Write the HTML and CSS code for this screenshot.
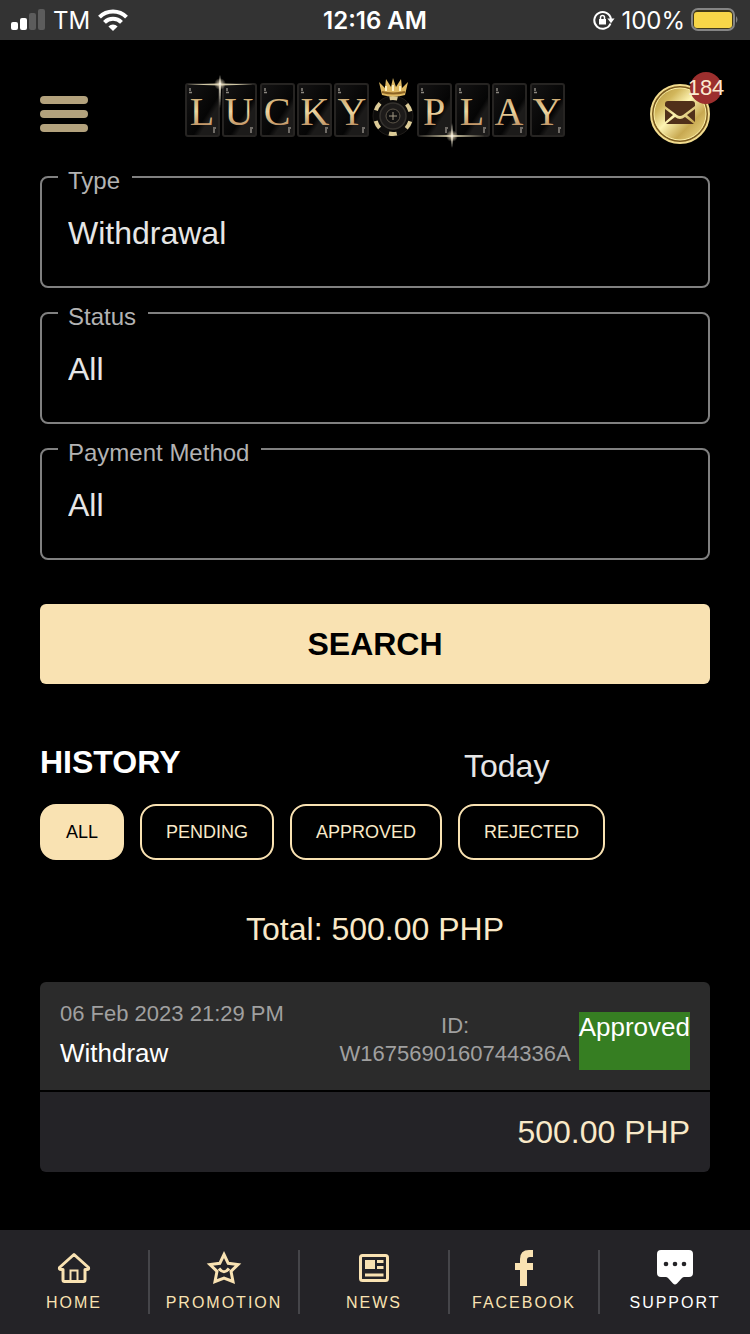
FILE: index.html
```html
<!DOCTYPE html>
<html lang="en">

<head>
    <meta charset="UTF-8" />
    <meta name="viewport" content="width=device-width, initial-scale=1.0" />
    <title>Lucky Play - History</title>
    <link rel="stylesheet" href="styles.css">
</head>

<body>

    <div class="status-bar">
        <div class="status-left">
            <svg width="34" height="22" viewBox="0 0 34 22">
                <rect x="0" y="13" width="7" height="8" rx="2" fill="#fff" />
                <rect x="9" y="9" width="7" height="12" rx="2" fill="#fff" />
                <rect x="18" y="4" width="7" height="17" rx="2" fill="#5c5c5c" />
                <rect x="27" y="0" width="7" height="21" rx="2" fill="#5c5c5c" />
            </svg>
            <span>TM</span>
            <svg width="30" height="22" viewBox="0 0 30 22" fill="none" stroke="#fff" stroke-width="4">
                <path d="M1.5 8.2a19 19 0 0 1 27 0" />
                <path d="M6.5 13.4a12 12 0 0 1 17 0" />
                <path d="M15 22l-4.6-4.6a6.6 6.6 0 0 1 9.2 0z" fill="#fff" stroke="none" />
            </svg>
        </div>
        <div class="status-time">12:16 AM</div>
        <div class="status-right">
            <svg width="22" height="20" viewBox="0 0 22 20" fill="none" stroke="#fff" stroke-width="2">
                <path d="M17.5 13.5A8.4 8.4 0 1 1 18 9" />
                <path d="M14.4 8.6h7.2l-3.6 4.6z" fill="#fff" stroke="none" />
                <path d="M6 9h7v5.5H6z" fill="#fff" stroke="none" />
                <path d="M7.5 9V7.5a2 2 0 0 1 4 0V9" stroke-width="1.5" />
            </svg>
            <span>100%</span>
            <svg width="48" height="24" viewBox="0 0 48 24">
                <rect x="1" y="1" width="42" height="21" rx="6" fill="#40381a" stroke="#858585" stroke-width="2" />
                <rect x="3" y="4" width="38" height="16" rx="3" fill="#f8d648" />
                <path d="M45 8q3 3.5 0 7z" fill="#858585" />
            </svg>
        </div>
    </div>

    <header class="header">
        <button class="menu-btn" aria-label="Menu">
            <span></span><span></span><span></span>
        </button>

        <svg width="380" height="78" viewBox="0 0 380 78" role="img" aria-label="Lucky Play">
            <defs>
                <linearGradient id="gold" x1="0" y1="0" x2="0" y2="1">
                    <stop offset="0" stop-color="#b98f55" />
                    <stop offset="0.5" stop-color="#ecd5a0" />
                    <stop offset="1" stop-color="#a86f43" />
                </linearGradient>
                <linearGradient id="card-fill" x1="0" y1="0" x2="1" y2="1">
                    <stop offset="0" stop-color="#151414" />
                    <stop offset="0.6" stop-color="#050505" />
                    <stop offset="0.7" stop-color="#1c1b1a" />
                </linearGradient>
                <radialGradient id="spark">
                    <stop offset="0" stop-color="#fff" />
                    <stop offset="0.3" stop-color="#e8dcc0" stop-opacity="0.7" />
                    <stop offset="1" stop-color="#e8dcc0" stop-opacity="0" />
                </radialGradient>
                <g id="card">
                    <rect x="1" y="9" width="33" height="52" rx="2" fill="url(#card-fill)" stroke="#262422" stroke-width="2" />
                    <path d="M5 13v3M4 17.5h3M29 54v4M28 53h3" stroke="#8b8780" stroke-width="1.5" />
                </g>
            </defs>
            <use href="#card" x="0" />
            <use href="#card" x="37" />
            <use href="#card" x="75" />
            <use href="#card" x="112" />
            <use href="#card" x="149" />
            <use href="#card" x="232" />
            <use href="#card" x="270" />
            <use href="#card" x="307" />
            <use href="#card" x="345" />
            <g class="logo-text" fill="url(#gold)">
                <text x="17" y="50">L</text>
                <text x="54" y="50">U</text>
                <text x="92" y="50">C</text>
                <text x="130" y="50">K</text>
                <text x="167" y="50">Y</text>
                <text x="249" y="50">P</text>
                <text x="287" y="50">L</text>
                <text x="324" y="50">A</text>
                <text x="362" y="50">Y</text>
            </g>
            <!-- poker chip -->
            <circle cx="208" cy="41" r="20" fill="#0d0c0b" stroke="#1f1c19" />
            <circle cx="208" cy="41" r="18" fill="none" stroke="#dccb97" stroke-width="4" stroke-dasharray="8 10.85" stroke-dashoffset="-5.4" />
            <circle cx="208" cy="41" r="13" fill="#1d1b1a" stroke="#35322e" stroke-width="1.5" />
            <circle cx="208" cy="41" r="7" fill="#111" stroke="#5b5448" />
            <path d="M208 37v8M204 41h8" stroke="#a39a85" />
            <!-- crown -->
            <path d="M197 20L194 7l6 6 1-9 5 8 2-9 3 9 5-8 1 9 6-6-3 13q-11 3-23 0z" fill="#e0ba63" />
            <path d="M197 17q11 3 23 0" fill="none" stroke="#8d6424" stroke-width="2" />
            <path d="M201 11v5M208 10v6M215 11v5" stroke="#fff0bd" stroke-width="2" />
            <!-- sparkles -->
            <path d="M2 9.500l33-1 33 1-33 1z" fill="#cfc6a4" />
            <path d="M35 0l1 9-1 24-1-24z" fill="#e9e3cf" />
            <circle cx="35" cy="9" r="6" fill="url(#spark)" />
            <path d="M234 61l33-1 33 1-33 1z" fill="#cfc6a4" />
            <path d="M267 48l1 13-1 12-1-12z" fill="#e9e3cf" />
            <circle cx="267" cy="61" r="6" fill="url(#spark)" />
        </svg>

        <button class="mail-btn" aria-label="Messages">
            <svg width="60" height="60" viewBox="0 0 60 60">
                <defs>
                    <linearGradient id="coin" x1="0" y1="0" x2="1" y2="1">
                        <stop offset="0" stop-color="#b0903a" />
                        <stop offset="0.25" stop-color="#d2b75c" />
                        <stop offset="0.45" stop-color="#fdf3b2" />
                        <stop offset="0.7" stop-color="#c8a951" />
                        <stop offset="1" stop-color="#f3e08f" />
                    </linearGradient>
                </defs>
                <circle cx="30" cy="30" r="29" fill="#7a5a1d" stroke="#f2dc8f" stroke-width="2" />
                <circle cx="30" cy="30" r="26" fill="url(#coin)" stroke="#fff2a8" />
                <path d="M15 20q0-3 3-3h24q3 0 3 3v2L33 31q-3 2-6 0L15 22z" fill="#51301a" />
                <path d="M15 25l8 6-8 7zM45 25l-8 6 8 7z" fill="#51301a" />
                <path d="M16 40l9-7q5 4 10 0l9 7z" fill="#51301a" />
            </svg>
            <span class="badge">184</span>
        </button>
    </header>

    <main class="content">
        <form class="search-form">
            <fieldset class="field">
                <legend><label for="type">Type</label></legend>
                <select id="type">
                    <option>Withdrawal</option>
                    <option>Deposit</option>
                </select>
            </fieldset>
            <fieldset class="field">
                <legend><label for="status">Status</label></legend>
                <select id="status">
                    <option>All</option>
                </select>
            </fieldset>
            <fieldset class="field">
                <legend><label for="method">Payment Method</label></legend>
                <select id="method">
                    <option>All</option>
                </select>
            </fieldset>
            <button type="button" class="search-btn">SEARCH</button>
        </form>

        <div class="history-head">
            <h2>HISTORY</h2>
            <select class="period" aria-label="Period">
                <option>Today</option>
            </select>
        </div>

        <div class="filters">
            <button class="chip active">ALL</button>
            <button class="chip">PENDING</button>
            <button class="chip">APPROVED</button>
            <button class="chip">REJECTED</button>
        </div>

        <p class="total">Total: 500.00 PHP</p>

        <div class="record">
            <div class="record-top">
                <div class="record-info">
                    <div class="record-date">06 Feb 2023 21:29 PM</div>
                    <div class="record-type">Withdraw</div>
                </div>
                <div class="record-id">ID:<br>W1675690160744336A</div>
                <div class="record-status">Approved</div>
            </div>
            <div class="record-amount">500.00 PHP</div>
        </div>
    </main>

    <nav class="bottom-nav">
        <a href="#">
            <svg width="36" height="36" viewBox="0 0 36 36" fill="none" stroke="currentColor" stroke-width="3" stroke-linejoin="round">
                <path d="M18 4.5L3.5 17.5q-.5 2 1.5 2H7V30q0 1.5 1.5 1.5h19Q29 31.5 29 30V19.5h2q2 0 1.500-2z" />
                <path d="M14.5 31V20.500h7V31" stroke-width="2" stroke-linejoin="miter" />
            </svg>
            <span>HOME</span>
        </a>
        <a href="#">
            <svg width="36" height="36" viewBox="0 0 36 36" fill="none" stroke="currentColor" stroke-width="3">
                <path d="M18 4.500l4.200 8.800 9.800 1.200-7 6.800 2 10.200-9-3.500-9 3.500 2-10.200-7-6.800 9.800-1.200z" />
                <path d="M13 18.500q5 6.500 10 0" />
            </svg>
            <span>PROMOTION</span>
        </a>
        <a href="#">
            <svg width="36" height="36" viewBox="0 0 36 36" fill="none" stroke="currentColor" stroke-width="3">
                <rect x="4.500" y="5.500" width="27" height="25" rx="2" />
                <path d="M9 10h10v9H9z" fill="currentColor" stroke="none" />
                <path d="M21 11.500h6.500M21 17.500h6.500M9 25h18.500" />
            </svg>
            <span>NEWS</span>
        </a>
        <a href="#">
            <svg width="36" height="36" viewBox="0 0 36 36" fill="currentColor">
                <path d="M14 36V20H9v-7h5V9q0-9 9-9h4v7h-3q-3 0-3 3v3h6v7h-6v16z" />
            </svg>
            <span>FACEBOOK</span>
        </a>
        <a href="#" class="support">
            <svg width="36" height="36" viewBox="0 0 36 36" fill="currentColor">
                <path d="M4 0h28q4 0 4 4v19q0 4-4 4h-5q-1.500 0-2.500 1.500L20 33.500q-2 2-4 0L11.500 28.500Q10.500 27 9 27H4q-4 0-4-4V4q0-4 4-4z" />
                <g fill="#242327">
                    <circle cx="9" cy="14" r="2.3" />
                    <circle cx="18" cy="14" r="2.3" />
                    <circle cx="27" cy="14" r="2.3" />
                </g>
            </svg>
            <span>SUPPORT</span>
        </a>
    </nav>

</body>

</html>
```
FILE: styles.css
```css
* {
    box-sizing: border-box;
}

body {
    background: #000;
    color: #fff;
    font-family: "Liberation Sans", Arial, sans-serif;
    margin: 0;
    min-height: 100vh;
    display: flex;
    flex-direction: column;
}

button,
select {
    font-family: inherit;
    margin: 0;
    cursor: pointer;
}

svg {
    display: block;
}

/* phone status bar */
.status-bar {
    display: grid;
    grid-template-columns: 1fr auto 1fr;
    align-items: center;
    height: 40px;
    padding: 0 11px;
    background: #333;
    font-family: Inter, sans-serif;
    font-size: 24px;
}

.status-left,
.status-right {
    display: flex;
    align-items: center;
    gap: 8px;
}

.status-right {
    justify-content: flex-end;
    gap: 6px;
}

.status-time {
    font-weight: 600;
}

/* header */
.header {
    display: flex;
    justify-content: space-between;
    align-items: center;
    padding: 35px 40px 8px;
}

.menu-btn {
    width: 60px;
    padding: 0;
    background: none;
    border: none;
    display: flex;
    flex-direction: column;
    gap: 6px;
}

.menu-btn span {
    width: 48px;
    height: 8px;
    border-radius: 4px;
    background: #b3a27d;
}

.logo-text {
    font-family: "Liberation Serif", serif;
    font-size: 40px;
    text-anchor: middle;
}

.mail-btn {
    position: relative;
    padding: 0;
    background: none;
    border: none;
}

.badge {
    position: absolute;
    top: -12px;
    right: -12px;
    width: 32px;
    height: 32px;
    border-radius: 50%;
    background: #9c2f2e;
    color: #fbe9cf;
    font-size: 22px;
    line-height: 32px;
    display: flex;
    justify-content: center;
}

.content {
    padding: 0 40px 40px;
}

/* search form */
.search-form {
    display: flex;
    flex-direction: column;
    gap: 9px;
}

.field {
    margin: 0;
    min-width: 0;
    padding: 0 16px 13px;
    border: 2px solid #808080;
    border-radius: 8px;
}

.field legend {
    padding: 8px 12px 0 10px;
    color: #b3b3b3;
    font-size: 24px;
    line-height: 24px;
}

.field select {
    appearance: none;
    display: block;
    width: 100%;
    height: 80px;
    padding: 0 10px;
    background: none;
    border: none;
    outline: none;
    color: #e6e6e6;
    font-size: 32px;
}

.search-btn {
    height: 80px;
    margin-top: 35px;
    background: #f9e2b2;
    border: none;
    border-radius: 6px;
    color: #000;
    font-size: 32px;
    font-weight: bold;
}

/* history */
.history-head {
    display: grid;
    grid-template-columns: 1fr 246px;
    align-items: start;
    margin-top: 60px;
}

.history-head h2 {
    margin: 0;
    font-size: 32px;
    line-height: 36px;
}

.period {
    appearance: none;
    height: 44px;
    padding: 0;
    background: none;
    border: none;
    color: #e6e6e6;
    font-size: 32px;
}

.filters {
    display: flex;
    flex-wrap: wrap;
    gap: 16px;
    margin-top: 16px;
}

.chip {
    height: 56px;
    padding: 0 24px;
    background: #000;
    border: 2px solid #f9e2b2;
    border-radius: 16px;
    color: #f9e9c8;
    font-size: 18px;
}

.chip.active {
    background: #f9e2b2;
    color: #000;
}

.total {
    margin: 50px 0 34px;
    color: #f9e9c8;
    font-size: 32px;
    line-height: 38px;
    text-align: center;
}

.record {
    border-radius: 6px;
    overflow: hidden;
}

.record-top {
    display: flex;
    align-items: flex-start;
    gap: 8px;
    padding: 16px 20px;
    background: #2b2b2b;
    border-bottom: 2px solid #000;
    min-height: 110px;
}

.record-info {
    flex: 1;
}

.record-date {
    color: #a0a0a0;
    font-size: 22px;
    line-height: 32px;
}

.record-type {
    margin-top: 4px;
    font-size: 26px;
    line-height: 38px;
}

.record-id {
    margin-top: 14px;
    color: #a0a0a0;
    font-size: 22px;
    line-height: 28px;
    text-align: center;
}

.record-status {
    height: 58px;
    margin-top: 14px;
    background: #367e22;
    font-size: 26px;
    line-height: 30px;
}

.record-amount {
    padding: 0 20px;
    background: #242327;
    color: #f9e9c8;
    font-size: 32px;
    line-height: 80px;
    text-align: right;
}

/* bottom navigation */
.bottom-nav {
    position: sticky;
    bottom: 0;
    display: grid;
    grid-template-columns: repeat(5, 1fr);
    margin-top: auto;
    padding: 20px 0;
    background: #242327;
}

.bottom-nav a {
    display: flex;
    flex-direction: column;
    align-items: center;
    gap: 8px;
    padding-bottom: 2px;
    border-right: 2px solid #454549;
    color: #f9e2b2;
    font-size: 16px;
    line-height: 18px;
    letter-spacing: 2px;
    text-decoration: none;
}

.bottom-nav a:last-child {
    border-right: none;
}

.bottom-nav .support {
    color: #fff;
}
```
